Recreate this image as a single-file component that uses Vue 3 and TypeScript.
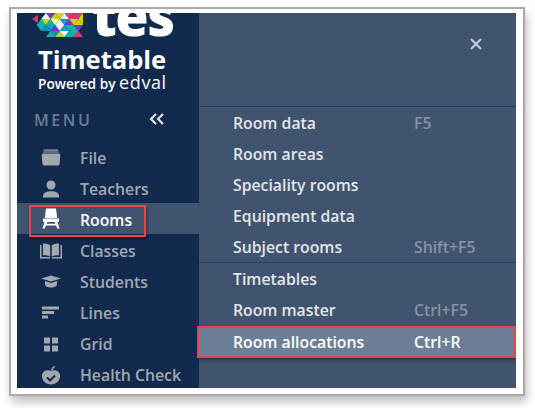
<script setup lang="ts">
const menuItems = [
  { label: 'File', icon: 'file' },
  { label: 'Teachers', icon: 'teachers' },
  { label: 'Rooms', icon: 'rooms', active: true },
  { label: 'Classes', icon: 'classes' },
  { label: 'Students', icon: 'students' },
  { label: 'Lines', icon: 'lines' },
  { label: 'Grid', icon: 'grid' },
  { label: 'Health Check', icon: 'health' }
]

const groups = [
  [
    { label: 'Room data', key: 'F5' },
    { label: 'Room areas', key: '' },
    { label: 'Speciality rooms', key: '' },
    { label: 'Equipment data', key: '' },
    { label: 'Subject rooms', key: 'Shift+F5' }
  ],
  [
    { label: 'Timetables', key: '' },
    { label: 'Room master', key: 'Ctrl+F5' },
    { label: 'Room allocations', key: 'Ctrl+R', active: true }
  ]
]

const tiles = [
  { p: '0,9 9,3 9,15', c: '#e8356f' },
  { p: '21,0 35,0 28,9', c: '#7a35c4' },
  { p: '35,0 49,0 42,9', c: '#c9d80a' },
  { p: '49,0 63,0 56,9', c: '#e8356f' },
  { p: '63,0 77,0 70,9', c: '#e8356f' },
  { p: '14,9 28,9 21,0', c: '#f4f4f4' },
  { p: '28,9 42,9 35,0', c: '#c9d80a' },
  { p: '42,9 56,9 49,0', c: '#f4f4f4' },
  { p: '56,9 70,9 63,0', c: '#e8356f' },
  { p: '70,9 77,0 77,18', c: '#c9d80a' },
  { p: '7,18 21,18 14,9', c: '#12b5a5' },
  { p: '14,9 28,9 21,18', c: '#c9d80a' },
  { p: '21,18 35,18 28,9', c: '#12b5a5' },
  { p: '28,9 42,9 35,18', c: '#f4f4f4' },
  { p: '35,18 49,18 42,9', c: '#f4f4f4' },
  { p: '42,9 56,9 49,18', c: '#0d9fd0' },
  { p: '49,18 63,18 56,9', c: '#7a35c4' },
  { p: '56,9 70,9 63,18', c: '#c9d80a' },
  { p: '63,18 77,18 70,9', c: '#c9d80a' },
  { p: '7,18 21,18 14,27', c: '#12b5a5' },
  { p: '21,18 35,18 28,27', c: '#0d9fd0' },
  { p: '14,27 28,27 21,18', c: '#0d8fc0' },
  { p: '28,27 42,27 35,18', c: '#7a35c4' },
  { p: '35,18 49,18 42,27', c: '#f4f4f4' },
  { p: '42,27 56,27 49,18', c: '#0d9fd0' },
  { p: '49,18 63,18 56,27', c: '#12b5a5' },
  { p: '56,27 70,27 63,18', c: '#12b5a5' },
  { p: '63,18 77,18 70,27', c: '#7a35c4' },
  { p: '21,36 35,36 28,27', c: '#12b5a5' },
  { p: '28,27 42,27 35,36', c: '#0d8fc0' },
  { p: '35,36 49,36 42,27', c: '#c9d80a' },
  { p: '42,27 56,27 49,36', c: '#f4f4f4' },
  { p: '49,36 63,36 56,27', c: '#12b5a5' },
  { p: '56,27 70,27 63,36', c: '#12b5a5' },
  { p: '63,36 77,36 70,27', c: '#e8356f' }
]
</script>

<template>
  <div class="shot">
    <div class="frame">
      <div class="app">
        <aside class="sidebar">
          <div class="brand">
            <div class="logo">
              <svg class="fish" viewBox="0 0 77 36" width="51" height="24">
                <polygon v-for="(t, i) in tiles" :key="i" :points="t.p" :fill="t.c" />
              </svg>
              <span class="tes">tes</span>
            </div>
            <div class="timetable">Timetable</div>
            <div class="powered">Powered by <span class="edval">edval</span></div>
          </div>
          <div class="menu-head">
            <span class="menu-title">MENU</span>
            <svg class="collapse" viewBox="0 0 16 12" width="16" height="12">
              <path d="M7 1 2 6l5 5M14 1 9 6l5 5" fill="none" stroke="#dfe4ea" stroke-width="2.200" />
            </svg>
          </div>
          <nav class="nav">
            <div v-for="item in menuItems" :key="item.label" :class="['nav-item', { active: item.active }]">
              <svg class="nav-icon" viewBox="0 0 22 22" width="22" height="22" fill="currentColor">
                <template v-if="item.icon === 'file'">
                  <path d="M5 3.500h12c.8 0 1.300.5 1.500 1.200H3.500C3.700 4 4.200 3.500 5 3.500z" />
                  <path d="M3.500 5.500h15l.5 1H3z" />
                  <path d="M2.500 7.500h17l.8 2-.8 8.500c-.1.900-.7 1.500-1.500 1.500H4c-.8 0-1.400-.6-1.500-1.500L1.700 9.500z" />
                </template>
                <template v-else-if="item.icon === 'teachers'">
                  <circle cx="11" cy="8" r="4.500" />
                  <path d="M3 20.500v-1.500c0-3 3-4.800 8-4.800s8 1.800 8 4.800v1.500z" />
                </template>
                <template v-else-if="item.icon === 'rooms'">
                  <path d="M6 .5h10l1.200 9.500H4.800z" />
                  <path d="M3 10.500h16V14h-1.500l2 6.500h-2.300l-1-3H5.800l-1 3H2.500l2-6.500H3zM7.300 14l-.6 1.800h8.600L14.700 14z" />
                </template>
                <template v-else-if="item.icon === 'classes'">
                  <path d="M0 6h1.500v12h8.500v1.500H0zM22 6h-1.500v12H12v1.500h10z" />
                  <path d="M3 4.500c3 0 6 .5 7.200 1.700v11.300C9 16.700 6 16.300 3 16.300zM19 4.500c-3 0-6 .5-7.200 1.700v11.300c1.200-.8 4.200-1.200 7.200-1.200z" />
                </template>
                <template v-else-if="item.icon === 'students'">
                  <path d="M11 5.500l10 3-10 3L1 8.500z" />
                  <path d="M5 11l6 2 6-2v3.500c0 1.800-3 3-6 3s-6-1.200-6-3z" />
                </template>
                <template v-else-if="item.icon === 'lines'">
                  <rect x="2" y="5.500" width="17" height="3" />
                  <rect x="2" y="10" width="12" height="3" />
                  <rect x="2" y="14.500" width="6" height="3" />
                </template>
                <template v-else-if="item.icon === 'grid'">
                  <rect x="4" y="5.500" width="6" height="6" />
                  <rect x="12" y="5.500" width="6" height="6" />
                  <rect x="4" y="13.500" width="6" height="6" />
                  <rect x="12" y="13.500" width="6" height="6" />
                </template>
                <template v-else>
                  <path d="M11 8c2-1.200 8-1.200 9 4 .6 5-3.500 9.500-9 9.500S1.400 17 2 12c1-5.200 7-5.200 9-4z" />
                  <path d="M11 7.500c.3-2 1.500-3.500 3.500-4.700l.7 1.200C13.500 5 12.500 6.500 12.300 7.500z" />
                  <path d="M7 14.500l3 3 5-5" fill="none" stroke="#122a4e" stroke-width="2" />
                </template>
              </svg>
              <span class="nav-label">{{ item.label }}</span>
            </div>
            <div class="callout rooms-callout" />
          </nav>
        </aside>
        <main class="panel">
          <div class="panel-head">
            <svg class="close" viewBox="0 0 14 14" width="14" height="14">
              <path d="M2 2l10 10M12 2 2 12" fill="none" stroke="#c3cad3" stroke-width="2.200" />
            </svg>
          </div>
          <section v-for="(group, g) in groups" :key="g" class="group">
            <div v-for="row in group" :key="row.label" :class="['row', { active: row.active }]">
              <span class="row-label">{{ row.label }}</span>
              <span class="row-key">{{ row.key }}</span>
            </div>
          </section>
        </main>
      </div>
    </div>
  </div>
</template>

<style scoped>
.shot {
  width: 535px;
  height: 408px;
  box-sizing: border-box;
  padding: 7px 10px 12px 9px;
  background: #fff;
  font-family: "Open Sans", "Noto Sans", sans-serif;
  overflow: hidden;
}

.frame {
  width: 516px;
  height: 389px;
  box-sizing: border-box;
  padding: 4px 7px 6px 6px;
  border: 2px solid #a9a9a9;
  background: #fff;
  box-shadow: 2px 6px 9px rgba(0, 0, 0, 0.25);
}

.app {
  display: flex;
  width: 499px;
  height: 375px;
  overflow: hidden;
  background: #41546f;
}

.sidebar {
  width: 182px;
  flex: none;
  background: #122a4e;
}

.brand {
  height: 85px;
  padding-left: 15px;
  color: #fff;
  overflow: hidden;
}

.logo {
  display: flex;
  height: 25px;
  overflow: hidden;
}

.fish {
  flex: none;
}

.tes {
  margin: -25px 0 0 9px;
  font-size: 54px;
  line-height: 54px;
  height: 49px;
  font-weight: 800;
  letter-spacing: -1.500px;
}

.timetable {
  margin: 6px 0 0 6px;
  font-size: 25.500px;
  line-height: 30px;
  font-weight: 700;
}

.powered {
  margin: -1px 0 0 6px;
  font-size: 13.700px;
  line-height: 18px;
  font-weight: 600;
  white-space: nowrap;
}

.edval {
  font-size: 18px;
  font-weight: 400;
  letter-spacing: 0.6px;
}

.menu-head {
  display: flex;
  align-items: center;
  justify-content: space-between;
  height: 20px;
  margin-top: 12px;
  padding: 0 34px 0 17px;
}

.menu-title {
  color: #6f7d92;
  font-size: 16px;
  font-weight: 600;
  letter-spacing: 2.600px;
}

.collapse {
  margin-bottom: 2px;
}

.nav {
  position: relative;
  margin-top: 11px;
}

.nav-item {
  display: flex;
  align-items: center;
  height: 31px;
  padding-left: 23px;
  color: #a3a8ae;
}

.nav-item.active {
  background: #41546f;
  color: #fff;
}

.nav-icon {
  flex: none;
  width: 22px;
  height: 22px;
}

.nav-label {
  margin: 2px 0 0 18px;
  font-size: 15.800px;
  font-weight: 600;
  white-space: nowrap;
}

.callout {
  position: absolute;
  box-sizing: border-box;
  border: 2px solid #ef4146;
  box-shadow: 1px 2px 3px rgba(0, 0, 0, 0.4);
  pointer-events: none;
}

.rooms-callout {
  left: 12px;
  top: 64px;
  width: 117px;
  height: 32px;
}

.panel {
  flex: 1;
  min-width: 0;
  color: #e3e6ea;
}

.panel-head {
  display: flex;
  justify-content: flex-end;
  align-items: flex-start;
  height: 94px;
  padding: 24px 33px 0 0;
  box-sizing: border-box;
  border-bottom: 1px solid #2a3e5f;
}

.panel-head .close {
  display: block;
}

.group {
  border-bottom: 1px solid #2a3e5f;
}

.group:last-child {
  border-bottom: none;
}

.row {
  display: flex;
  align-items: center;
  height: 31px;
  padding-left: 34px;
  font-size: 15.800px;
  font-weight: 600;
  box-sizing: border-box;
}

.row-label {
  width: 181px;
  flex: none;
  white-space: nowrap;
}

.row-key {
  color: #8693a5;
  white-space: nowrap;
}

.row.active {
  margin: 1px 0 0 -2px;
  padding-left: 34px;
  height: 32px;
  background: #6d7f97;
  border: 2px solid #ef4146;
  box-shadow: 1px 2px 3px rgba(0, 0, 0, 0.4);
  color: #fff;
}

.row.active .row-key {
  color: #fff;
}
</style>

<style>
body {
  background: #fff;
  overflow: hidden;
}
</style>
